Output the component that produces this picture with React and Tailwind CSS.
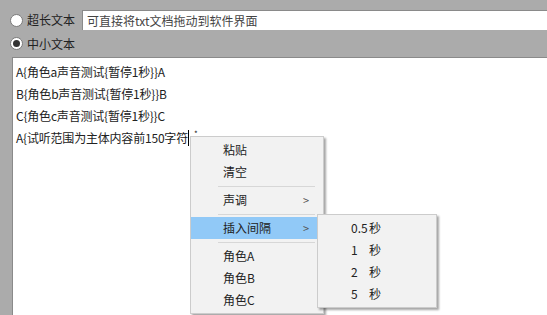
import React from 'react'

const font = { fontFamily: '"Noto Sans CJK SC", "Noto Sans", sans-serif' }

function Radio({ checked }) {
  return (
    <span className="w-[13px] h-[13px] rounded-full bg-white border border-[#7a7a7a] flex items-center justify-center shrink-0">
      {checked && <span className="w-[7px] h-[7px] rounded-full bg-[#333]" />}
    </span>
  )
}

function Item({ label, arrow, active }) {
  return (
    <div className={`h-[22px] flex items-center pl-[32px] pr-[14px] ${active ? 'bg-[#91c9f7]' : ''}`}>
      <span className="flex-1">{label}</span>
      {arrow && <span className="text-[11px] text-[#555]">&gt;</span>}
    </div>
  )
}

function Sep() {
  return (
    <div className="h-[6px] flex items-center pl-[27px] pr-[8px]">
      <div className="w-full h-px bg-[#d7d7d7]" />
    </div>
  )
}

export default function App() {
  const lines = [
    'A{角色a声音测试{暂停1秒}}A',
    'B{角色b声音测试{暂停1秒}}B',
    'C{角色c声音测试{暂停1秒}}C',
  ]

  return (
    <div
      className="relative w-[547px] h-[315px] bg-[#ababab] overflow-hidden flex flex-col text-[12px] text-[#222]"
      style={font}
    >
      {/* top row */}
      <div className="flex items-center h-[20px] mt-[10px] pl-[10px]">
        <Radio />
        <span className="ml-[4px] w-[55px]">超长文本</span>
        <div className="flex-1 h-[20px] bg-white border-t border-l border-[#8a8a8a] flex items-center pl-[4px] text-[#444]">
          可直接将txt文档拖动到软件界面
        </div>
      </div>

      {/* second row */}
      <div className="flex items-center h-[27px] pl-[10px]">
        <Radio checked />
        <span className="ml-[4px]">中小文本</span>
      </div>

      {/* text area */}
      <div className="flex-1 ml-[12px] bg-white border-t border-l border-[#8a8a8a] pt-[3px] pl-[3px]">
        {lines.map((l) => (
          <div key={l} className="h-[22px] leading-[22px] tracking-[-0.2px]">{l}</div>
        ))}
        <div className="h-[22px] flex items-center tracking-[-0.2px]">
          <span>A{'{'}试听范围为主体内容前150字符</span>
          <span className="inline-block w-px h-[16px] bg-black" />
          <span className="ml-[5px] text-[8px] self-start mt-[1px]">*</span>
        </div>
      </div>

      {/* context menu */}
      <div className="absolute left-[190px] top-[136px] w-[134px] py-[2px] bg-[#f2f2f2] border border-[#cccccc] shadow-[2px_2px_2px_rgba(0,0,0,0.35)]">
        <Item label="粘贴" />
        <Item label="清空" />
        <Sep />
        <Item label="声调" arrow />
        <Sep />
        <Item label="插入间隔" arrow active />
        <Sep />
        <Item label="角色A" />
        <Item label="角色B" />
        <Item label="角色C" />
      </div>

      {/* submenu */}
      <div className="absolute left-[317px] top-[214px] w-[120px] py-[2px] bg-[#f2f2f2] border border-[#cccccc] shadow-[2px_2px_2px_rgba(0,0,0,0.35)]">
        {['0.5', '1', '2', '5'].map((t) => (
          <div key={t} className="h-[22px] flex items-center pl-[33px]">
            <span className="w-[18px]">{t}</span>
            <span>秒</span>
          </div>
        ))}
      </div>
    </div>
  )
}
